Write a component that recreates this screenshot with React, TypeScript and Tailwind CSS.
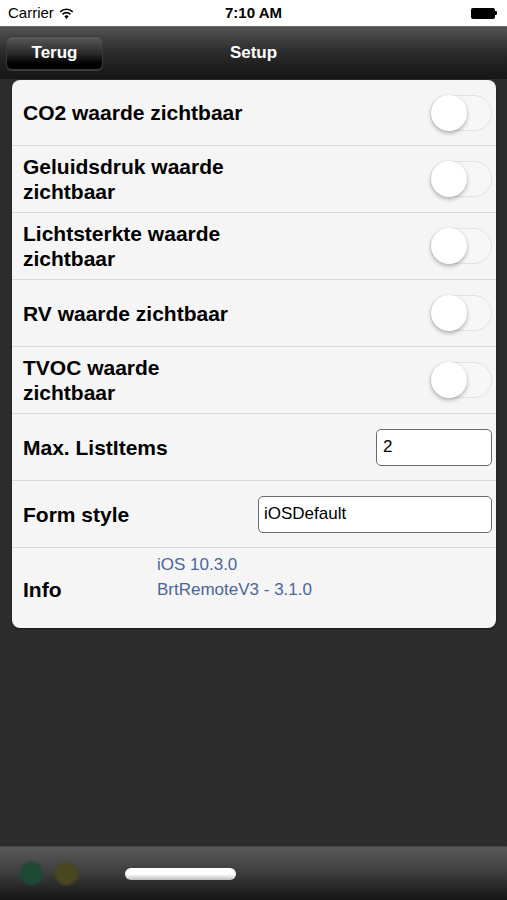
const font = { fontFamily: '"Liberation Sans", Arial, sans-serif' };

function Toggle() {
  return (
    <div className="relative w-[62px] h-[36px] rounded-full border border-[#e2e2e2] bg-[#f7f7f7]">
      <div className="absolute left-0 top-[-1px] w-[36px] h-[36px] rounded-full bg-white shadow-[0_2px_4px_rgba(0,0,0,0.3)]" />
    </div>
  );
}

function Row({ label, children, h = "h-[67px]" }: { label: React.ReactNode; children?: React.ReactNode; h?: string }) {
  return (
    <div className={`flex items-center justify-between ${h} pl-[11px] pr-[4px] border-b border-[#d9d9d9]`}>
      <div className="text-[21px] font-bold leading-[25px] text-black">{label}</div>
      {children}
    </div>
  );
}

export default function App() {
  return (
    <div className="w-[507px] h-[900px] flex flex-col bg-[#2c2c2c] overflow-hidden" style={font}>
      {/* status bar */}
      <div className="h-[26px] bg-white flex items-center justify-between px-[8px] relative shrink-0">
        <div className="flex items-center gap-[5px] text-[15px] text-black">
          Carrier
          <svg width="15" height="11" viewBox="0 0 15 11">
            <path d="M7.5 11 L5.3 8.3 A3.2 3.2 0 0 1 9.7 8.3 Z" fill="#000" />
            <path d="M3.6 6.3 A5.6 5.6 0 0 1 11.4 6.3" stroke="#000" strokeWidth="1.7" fill="none" />
            <path d="M1.3 3.8 A8.8 8.8 0 0 1 13.7 3.8" stroke="#000" strokeWidth="1.7" fill="none" />
          </svg>
        </div>
        <div className="absolute left-0 right-0 text-center text-[15px] font-bold text-black pointer-events-none">7:10 AM</div>
        <div className="flex items-center mr-[2px]">
          <div className="w-[24px] h-[11px] rounded-[2px] bg-black" />
          <div className="w-[2px] h-[4px] bg-black rounded-r-[1px]" />
        </div>
      </div>

      {/* nav bar */}
      <div className="h-[53px] shrink-0 relative flex items-center bg-gradient-to-b from-[#545454] via-[#2a2a2a] to-[#151515] border-t border-[#6a6a6a]">
        <div className="ml-[6px] w-[97px] h-[34px] rounded-[6px] border border-[#3a3a3a] bg-gradient-to-b from-[#5a5a5a] via-[#2c2c2c] to-[#000] flex items-center justify-center text-white font-bold text-[17px] shadow-[0_1px_0_rgba(255,255,255,0.15)]">
          Terug
        </div>
        <div className="absolute inset-0 flex items-center justify-center text-white font-bold text-[17px] pointer-events-none">
          Setup
        </div>
      </div>

      {/* content */}
      <div className="flex-1 pt-[1px] px-[12px] pr-[11px]">
        <div className="bg-[#f5f5f5] rounded-[8px] overflow-hidden shadow-[0_1px_2px_rgba(0,0,0,0.5)]">
          <Row label="CO2 waarde zichtbaar" h="h-[66px]"><Toggle /></Row>
          <Row label={<>Geluidsdruk waarde<br />zichtbaar</>}><Toggle /></Row>
          <Row label={<>Lichtsterkte waarde<br />zichtbaar</>}><Toggle /></Row>
          <Row label="RV waarde zichtbaar"><Toggle /></Row>
          <Row label={<>TVOC waarde<br />zichtbaar</>}><Toggle /></Row>
          <Row label="Max. ListItems">
            <div className="w-[116px] h-[37px] rounded-[5px] border-[1.5px] border-[#6b6b6b] bg-white flex items-center px-[6px] text-[17px] text-black">2</div>
          </Row>
          <Row label="Form style">
            <div className="w-[234px] h-[37px] rounded-[5px] border-[1.5px] border-[#6b6b6b] bg-white flex items-center px-[5px] text-[17px] text-black">iOSDefault</div>
          </Row>
          <div className="h-[80px] flex items-center pl-[11px]">
            <div className="w-[134px] text-[21px] font-bold text-black mt-[4px]">Info</div>
            <div className="flex flex-col text-[17px] leading-[25px] text-[#4b6596] -mt-[22px]">
              <span>iOS 10.3.0</span>
              <span>BrtRemoteV3 - 3.1.0</span>
            </div>
          </div>
        </div>
      </div>

      {/* bottom bar */}
      <div className="h-[54px] shrink-0 flex items-center bg-gradient-to-b from-[#5a5a5a] via-[#3c3c3c] to-[#151515] border-t border-[#444]">
        <div className="ml-[20px] w-[23px] h-[23px] rounded-full bg-[#1e4a35] blur-[1px]" />
        <div className="ml-[12px] w-[23px] h-[23px] rounded-full bg-[#4a4620] blur-[1px]" />
        <div className="ml-[47px] w-[111px] h-[12px] rounded-full bg-gradient-to-b from-white via-white to-[#bdbdbd]" />
      </div>
    </div>
  );
}
